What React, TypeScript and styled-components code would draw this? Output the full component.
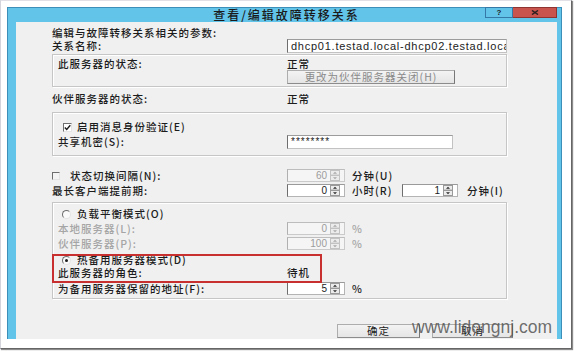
import React from "react";
import styled, { createGlobalStyle } from "styled-components";

const CJK = `"Noto Sans CJK SC", "Noto Sans", sans-serif`;
const LATIN = `"Liberation Sans", Arial, sans-serif`;

const GlobalStyle = createGlobalStyle`
  html, body { margin: 0; padding: 0; background: #ffffff; }
  body { width: 574px; height: 352px; overflow: hidden; font-family: ${CJK}; }
  * { box-sizing: border-box; }
`;

const Frame = styled.div`
  width: 572px;
  height: 349px;
  background: #ffffff;
  border-left: 1px solid #d4d4dc;
  border-top: 1px solid #e0e0e6;
  border-right: 1px solid #666;
  border-bottom: 1px solid #666;
  box-shadow: 1px 1px 1px rgba(0, 0, 0, 0.45);
  padding: 6px 0 0 6px;
`;

const Window = styled.div`
  width: 555px;
  height: 332px;
  background: #62c4e9;
  border: 1px solid #3b8fb8;
  border-bottom: none;
  padding: 0 4px 0 8px;
  display: flex;
  flex-direction: column;
`;

const TitleBar = styled.div`
  height: 14px;
  flex: none;
  display: grid;
  grid-template-columns: 1fr auto 1fr;
  align-items: center;
`;

const TitleText = styled.div`
  font-family: ${CJK};
  font-size: 12px;
  font-weight: 500;
  letter-spacing: 2px;
  line-height: 14px;
  color: #1a1a1a;
  white-space: nowrap;
`;

const TitleButtons = styled.div`
  justify-self: end;
  align-self: start;
  display: flex;
  margin-top: -1px;
`;

const HelpButton = styled.div`
  width: 28px;
  height: 11px;
  background: #62c4e9;
  border: 1px solid #3579a8;
  display: flex;
  align-items: center;
  justify-content: center;
  font: bold 8px/8px ${LATIN};
  color: #1a1a1a;
`;

const CloseButton = styled.div`
  width: 44px;
  height: 11px;
  background: #c9534d;
  border: 1px solid #8f3430;
  border-left: none;
  display: flex;
  align-items: center;
  justify-content: center;
`;

const Content = styled.div`
  position: relative;
  flex: 1;
  background: #f0f0f0;
  padding: 5px 50px 0 36px;
  display: flex;
  flex-direction: column;
  overflow: hidden;
`;

const Row = styled.div<{ $h: number; $mt?: number; $pl?: number }>`
  flex: none;
  display: flex;
  align-items: center;
  height: ${(p) => p.$h}px;
  margin-top: ${(p) => p.$mt ?? 0}px;
  padding-left: ${(p) => p.$pl ?? 0}px;
`;

const LabelCell = styled.div<{ $w: number }>`
  flex: none;
  width: ${(p) => p.$w}px;
  display: flex;
  align-items: center;
`;

const Text = styled.span<{ $dim?: boolean; $ml?: number }>`
  display: inline-block;
  font-family: ${CJK};
  font-size: 10.5px;
  font-weight: 500;
  letter-spacing: 1px;
  line-height: 12px;
  height: 12px;
  color: ${(p) => (p.$dim ? "#a5a5a5" : "#1c1c1c")};
  margin-left: ${(p) => p.$ml ?? 0}px;
  white-space: nowrap;
`;

const Unit = styled(Text)<{ $w?: number; $gap?: number }>`
  margin-left: ${(p) => p.$gap ?? 7}px;
  width: ${(p) => (p.$w ? `${p.$w}px` : "auto")};
  flex: none;
`;

const TextField = styled.div<{ $w: number }>`
  width: ${(p) => p.$w}px;
  height: 14px;
  background: #ffffff;
  border: 1px solid #c2c2c2;
  border-left-color: #6e6e6e;
  border-top-color: #9c9c9c;
  padding-left: 3px;
  font: 11px/12px ${LATIN};
  letter-spacing: 0.75px;
  color: #1c1c1c;
  white-space: nowrap;
  overflow: hidden;
`;

const Password = styled(TextField)`
  font-size: 10px;
  letter-spacing: 1px;
  line-height: 11px;
`;

const Group = styled.div<{ $mt: number; $pt: number; $pb: number }>`
  flex: none;
  margin-top: ${(p) => p.$mt}px;
  padding: ${(p) => p.$pt}px 0 ${(p) => p.$pb}px 5px;
  border: 1px solid #c6c6c6;
  box-shadow: inset 1px 1px 0 #ffffff, 1px 1px 0 #ffffff;
  display: flex;
  flex-direction: column;
`;

const Marked = styled.div<{ $mt: number }>`
  position: relative;
  flex: none;
  margin-top: ${(p) => p.$mt}px;
  display: flex;
  flex-direction: column;
  &::after {
    content: "";
    position: absolute;
    left: -6px;
    top: 0;
    width: 266px;
    height: 25px;
    border: 2px solid #c8302f;
    pointer-events: none;
  }
`;

const PushButton = styled.div<{ $w: number; $muted?: boolean }>`
  flex: none;
  width: ${(p) => p.$w}px;
  height: 14px;
  display: flex;
  align-items: center;
  justify-content: center;
  background: linear-gradient(#f3f3f3, #e5e5e5);
  border: 1px solid #adadad;
  border-right-color: #777;
  border-bottom-color: #8c8c8c;
  font-family: ${CJK};
  font-size: 10.5px;
  letter-spacing: 1px;
  line-height: 12px;
  color: ${(p) => (p.$muted ? "#8a8a8a" : "#1c1c1c")};
  white-space: nowrap;
`;

const ButtonBar = styled.div`
  flex: none;
  margin-top: 25px;
  margin-right: -6px;
  display: flex;
  justify-content: flex-end;
  gap: 12px;
`;

const CheckBox = styled.span<{ $flat?: boolean }>`
  flex: none;
  width: ${(p) => (p.$flat ? 8 : 9)}px;
  height: ${(p) => (p.$flat ? 8 : 9)}px;
  background: ${(p) => (p.$flat ? "#f4f4f4" : "#ffffff")};
  border: 1px solid;
  border-color: #6e6e6e #e4e4e4 #e4e4e4 #6e6e6e;
  display: flex;
  align-items: center;
  justify-content: center;
`;

const RadioDot = styled.span<{ $on?: boolean }>`
  flex: none;
  width: 9px;
  height: 9px;
  border-radius: 50%;
  background: #fafafa;
  border: 1px solid;
  border-color: #6e6e6e #e4e4e4 #e4e4e4 #6e6e6e;
  margin-right: 6px;
  display: flex;
  align-items: center;
  justify-content: center;
  &::after {
    content: "";
    display: ${(p) => (p.$on ? "block" : "none")};
    width: 3px;
    height: 3px;
    border-radius: 50%;
    background: #1c1c1c;
  }
`;

const SpinFrame = styled.div<{ $w: number; $off?: boolean }>`
  flex: none;
  width: ${(p) => p.$w}px;
  height: 13px;
  display: flex;
  align-items: center;
  background: ${(p) => (p.$off ? "#f5f5f5" : "#ffffff")};
  border: 1px solid ${(p) => (p.$off ? "#cacaca" : "#b4b4b4")};
  border-left-color: ${(p) => (p.$off ? "#b0b0b0" : "#6e6e6e")};
  border-top-color: ${(p) => (p.$off ? "#bdbdbd" : "#9a9a9a")};
  padding-right: 4px;
`;

const SpinValue = styled.span<{ $off?: boolean }>`
  flex: 1;
  text-align: right;
  padding-right: 3px;
  font: 10px/11px ${LATIN};
  color: ${(p) => (p.$off ? "#9c9c9c" : "#1c1c1c")};
`;

const Watermark = styled.div`
  position: absolute;
  left: 396px;
  top: 297px;
  font: 17.5px/17.5px ${LATIN};
  color: rgba(85, 85, 85, 0.85);
  white-space: nowrap;
  pointer-events: none;
`;

function SpinArrows({ off }: { off?: boolean }) {
  const line = off ? "#c2c2c2" : "#9a9a9a";
  const tri = off ? "#a8a8a8" : "#2a2a2a";
  return (
    <svg width="10" height="11" viewBox="0 0 10 11">
      <rect x="0.5" y="0.5" width="9" height="4.6" fill="#ececec" stroke={line} />
      <rect x="0.5" y="5.5" width="9" height="5" fill="#ececec" stroke={line} />
      <path d="M3 3.8 L5 1.8 L7 3.8 Z" fill={tri} />
      <path d="M3 7.2 L5 9.2 L7 7.2 Z" fill={tri} />
    </svg>
  );
}

function Spin({ w = 58, value, off }: { w?: number; value: string; off?: boolean }) {
  return (
    <SpinFrame $w={w} $off={off}>
      <SpinValue $off={off}>{value}</SpinValue>
      <SpinArrows off={off} />
    </SpinFrame>
  );
}

function CheckMark() {
  return (
    <svg width="7" height="7" viewBox="0 0 7 7">
      <path d="M0.8 3.4 L2.7 5.4 L6.3 1.2" fill="none" stroke="#1c1c1c" strokeWidth="1.4" />
    </svg>
  );
}

function CloseGlyph() {
  return (
    <svg width="8" height="5" viewBox="0 0 8 5">
      <path d="M1 0.5 L7 4.5 M7 0.5 L1 4.5" stroke="#2a2020" strokeWidth="1.5" />
    </svg>
  );
}

export default function App() {
  return (
    <>
      <GlobalStyle />
      <Frame>
        <Window>
          <TitleBar>
            <span />
            <TitleText>查看/编辑故障转移关系</TitleText>
            <TitleButtons>
              <HelpButton>?</HelpButton>
              <CloseButton>
                <CloseGlyph />
              </CloseButton>
            </TitleButtons>
          </TitleBar>
          <Content>
            <Row $h={12}>
              <Text>编辑与故障转移关系相关的参数:</Text>
            </Row>
            <Row $h={14}>
              <LabelCell $w={235}>
                <Text>关系名称:</Text>
              </LabelCell>
              <TextField $w={220}>dhcp01.testad.local-dhcp02.testad.local</TextField>
            </Row>

            <Group $mt={1} $pt={3} $pb={2}>
              <Row $h={12}>
                <LabelCell $w={229}>
                  <Text>此服务器的状态:</Text>
                </LabelCell>
                <Text>正常</Text>
              </Row>
              <Row $h={14}>
                <LabelCell $w={229} />
                <PushButton $w={168} $muted>
                  更改为伙伴服务器关闭(H)
                </PushButton>
              </Row>
            </Group>

            <Row $h={12} $mt={6}>
              <LabelCell $w={235}>
                <Text>伙伴服务器的状态:</Text>
              </LabelCell>
              <Text>正常</Text>
            </Row>

            <Group $mt={7} $pt={8} $pb={7}>
              <Row $h={12} $pl={5}>
                <CheckBox>
                  <CheckMark />
                </CheckBox>
                <Text $ml={5}>启用消息身份验证(E)</Text>
              </Row>
              <Row $h={13} $mt={2}>
                <LabelCell $w={229}>
                  <Text>共享机密(S):</Text>
                </LabelCell>
                <Password $w={166}>********</Password>
              </Row>
            </Group>

            <Row $h={13} $mt={13}>
              <LabelCell $w={235}>
                <CheckBox $flat />
                <Text $ml={10}>状态切换间隔(N):</Text>
              </LabelCell>
              <Spin value="60" off />
              <Unit>分钟(U)</Unit>
            </Row>
            <Row $h={13} $mt={2}>
              <LabelCell $w={235}>
                <Text>最长客户端提前期:</Text>
              </LabelCell>
              <Spin value="0" />
              <Unit $w={50}>小时(R)</Unit>
              <Spin w={56} value="1" />
              <Unit $gap={9}>分钟(I)</Unit>
            </Row>

            <Group $mt={5} $pt={5} $pb={3}>
              <Row $h={12} $pl={4}>
                <RadioDot />
                <Text>负载平衡模式(O)</Text>
              </Row>
              <Row $h={13} $mt={2}>
                <LabelCell $w={229}>
                  <Text $dim>本地服务器(L):</Text>
                </LabelCell>
                <Spin value="0" off />
                <Unit $dim>%</Unit>
              </Row>
              <Row $h={13} $mt={2}>
                <LabelCell $w={229}>
                  <Text $dim>伙伴服务器(P):</Text>
                </LabelCell>
                <Spin value="100" off />
                <Unit $dim>%</Unit>
              </Row>
              <Marked $mt={4}>
                <Row $h={12} $pl={4}>
                  <RadioDot $on />
                  <Text>热备用服务器模式(D)</Text>
                </Row>
                <Row $h={13}>
                  <LabelCell $w={229}>
                    <Text>此服务器的角色:</Text>
                  </LabelCell>
                  <Text>待机</Text>
                </Row>
              </Marked>
              <Row $h={13} $mt={3}>
                <LabelCell $w={229}>
                  <Text>为备用服务器保留的地址(F):</Text>
                </LabelCell>
                <Spin value="5" />
                <Unit>%</Unit>
              </Row>
            </Group>

            <ButtonBar>
              <PushButton $w={83}>确定</PushButton>
              <PushButton $w={81}>取消</PushButton>
            </ButtonBar>
            <Watermark>www.lidongnj.com</Watermark>
          </Content>
        </Window>
      </Frame>
    </>
  );
}
